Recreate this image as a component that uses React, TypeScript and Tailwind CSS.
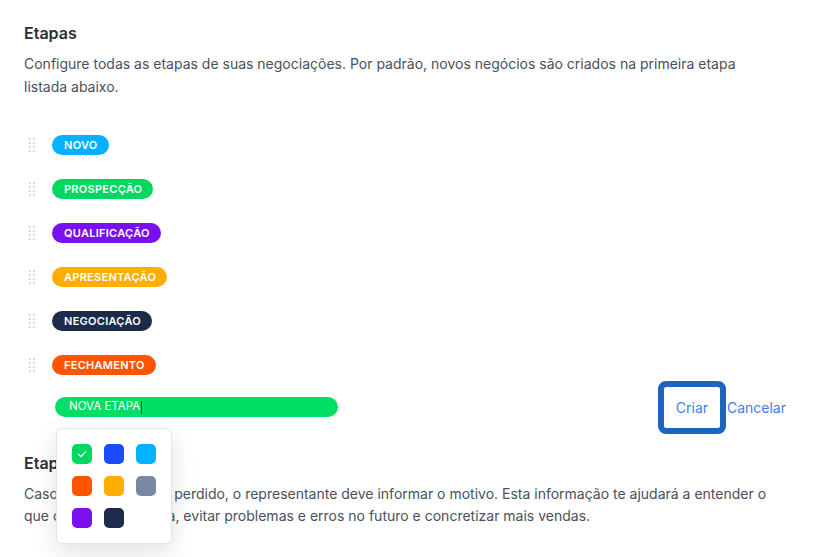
import React from 'react';

type Stage = { name: string; color: string };

const stages: Stage[] = [
    {name: 'NOVO', color: 'bg-[#00b2ff]'},
    {name: 'PROSPECÇÃO', color: 'bg-[#00d862]'},
    {name: 'QUALIFICAÇÃO', color: 'bg-[#7a10ef]'},
    {name: 'APRESENTAÇÃO', color: 'bg-[#ffae00]'},
    {name: 'NEGOCIAÇÃO', color: 'bg-[#1c2b4b]'},
    {name: 'FECHAMENTO', color: 'bg-[#ff5400]'},
];

const swatches = [
    'bg-[#00d862]', 'bg-[#1a4bff]', 'bg-[#00b2ff]',
    'bg-[#ff5400]', 'bg-[#ffae00]', 'bg-[#7788a1]',
    'bg-[#7a10ef]', 'bg-[#1c2b4b]',
];

const DragHandle = () => (
    <svg width="8" height="16" viewBox="0 0 8 16" className="text-[#c7c8cc]">
        {[1.5, 5.5, 9.5, 13.5].map((y) => (
            <React.Fragment key={y}>
                <rect x="1" y={y} width="1.6" height="1.6" fill="currentColor"/>
                <rect x="5" y={y} width="1.6" height="1.6" fill="currentColor"/>
            </React.Fragment>
        ))}
    </svg>
);

export default function App() {
    return (
        <div className="min-h-[557px] bg-white px-6 pt-[21px] text-[#2b2e33] font-['Inter',sans-serif]">
            <h2 className="text-[16px] font-semibold leading-6">Etapas</h2>
            <p className="mt-[7px] w-[770px] text-[14px] leading-[23px] text-[#4b505b]">
                Configure todas as etapas de suas negociações. Por padrão, novos negócios são criados na primeira etapa
                <br/>listada abaixo.
            </p>

            <div className="mt-[25px] flex flex-col">
                {stages.map((s) => (
                    <div key={s.name} className="flex h-[44px] items-center gap-[16px] pl-[4px]">
                        <DragHandle/>
                        <span
                            className={`${s.color} flex h-5 items-center rounded-full pl-3 pr-[11px] text-[11px] font-semibold tracking-[0.025em] text-white`}>
                            {s.name}
                        </span>
                    </div>
                ))}

                {/* new stage row */}
                <div className="flex h-[40px] items-center">
                    <div className="relative ml-[31px]">
                        <div className="flex h-5 w-[283px] items-center rounded-full bg-[#00de65] pl-[14px] text-[11.5px] text-white">
                            NOVA ETAPA<span className="ml-[1px] h-[13px] w-px bg-[#3a3a3a]"/>
                        </div>
                        <div className="absolute left-[1px] top-[31px] z-10 grid grid-cols-[20px_20px_20px] gap-3 rounded-md border border-[#e3e4e8] bg-white p-[15px] shadow-[0_8px_24px_rgba(0,0,0,0.12)]">
                            {swatches.map((c, i) => (
                                <div key={i} className={`${c} flex h-5 w-5 items-center justify-center rounded-[5px]`}>
                                    {i === 0 && (
                                        <svg width="12" height="12" viewBox="0 0 12 12" fill="none">
                                            <path d="M2.5 6.2 L5 8.6 L9.6 3.6" stroke="white" strokeWidth="1.3"
                                                  strokeLinecap="round" strokeLinejoin="round"/>
                                        </svg>
                                    )}
                                </div>
                            ))}
                        </div>
                    </div>
                    <div className="ml-auto mr-[29px] flex items-center">
                        <button
                            className="h-[41px] w-[56px] rounded-[2px] bg-white text-[14px] text-[#447cf0] outline-[6px] outline-solid outline-[#1f63c0]">
                            Criar
                        </button>
                        <button className="ml-[7px] text-[14px] text-[#447cf0]">Cancelar</button>
                    </div>
                </div>
            </div>

            <h2 className="mt-[24px] text-[16px] font-semibold leading-6">Etapas de perda</h2>
            <p className="mt-[8px] w-[770px] text-[14px] leading-[22px] text-[#4b505b]">
                Caso um negócio seja perdido, o representante deve informar o motivo. Esta informação te ajudará a entender o
                <br/>que ocasionou a perda, evitar problemas e erros no futuro e concretizar mais vendas.
            </p>
        </div>
    );
}
